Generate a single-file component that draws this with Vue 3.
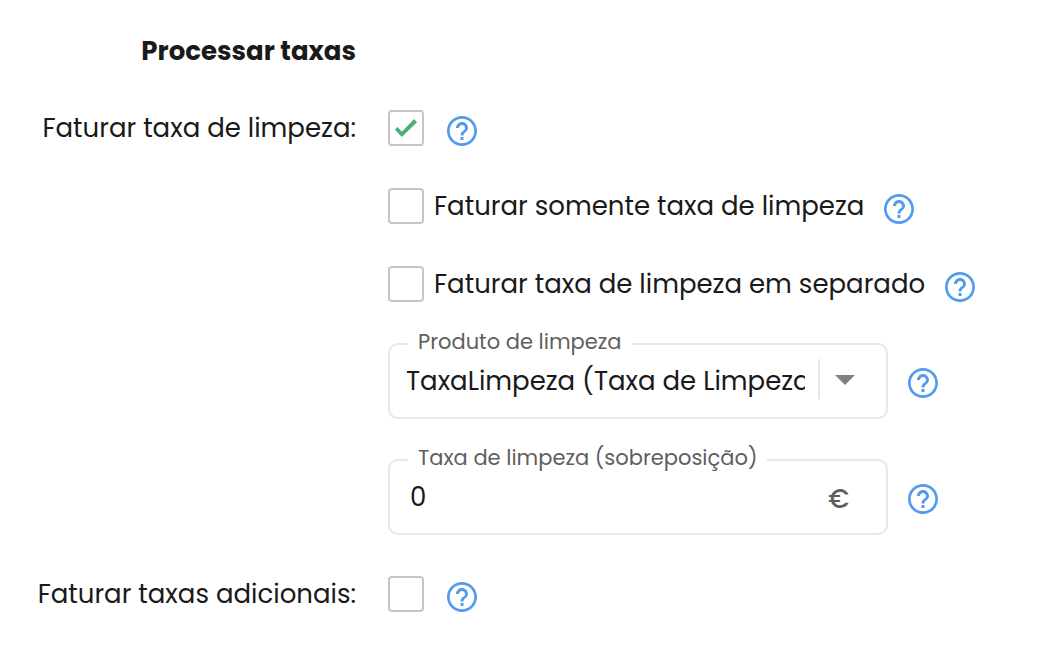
<script setup>
import { ref, h } from 'vue'

const cleaning = ref(true)
const onlyCleaning = ref(false)
const separate = ref(false)
const extra = ref(false)
const product = ref('taxa')
const amount = ref('0')

const HelpIcon = () =>
  h('svg', { viewBox: '0 0 24 24', width: 36, height: 36, fill: 'currentColor', 'aria-hidden': 'true' }, [
    h('path', {
      d: 'M11 18h2v-2h-2v2zm1-16C6.480 2 2 6.480 2 12s4.480 10 10 10 10-4.480 10-10S17.520 2 12 2zm0 18.200c-4.520 0-8.200-3.680-8.200-8.200s3.680-8.200 8.200-8.200 8.200 3.680 8.200 8.200-3.680 8.200-8.200 8.200zm0-14.200c-2.210 0-4 1.790-4 4h2c0-1.100.9-2 2-2s2 .9 2 2c0 2-3 1.750-3 5h2c0-2.250 3-2.500 3-5 0-2.210-1.790-4-4-4z'
    })
  ])
</script>

<template>
  <form class="fees" @submit.prevent>
    <h2 class="title">Processar taxas</h2>

    <label class="caption" for="cleaning">Faturar taxa de limpeza:</label>
    <div class="line">
      <input id="cleaning" v-model="cleaning" class="box" type="checkbox" />
      <button class="help" type="button" aria-label="Ajuda"><HelpIcon /></button>
    </div>

    <div class="line">
      <input id="only" v-model="onlyCleaning" class="box" type="checkbox" />
      <label class="option" for="only">Faturar somente taxa de limpeza</label>
      <button class="help" type="button" aria-label="Ajuda"><HelpIcon /></button>
    </div>

    <div class="line">
      <input id="separate" v-model="separate" class="box" type="checkbox" />
      <label class="option" for="separate">Faturar taxa de limpeza em separado</label>
      <button class="help" type="button" aria-label="Ajuda"><HelpIcon /></button>
    </div>

    <div class="line tall">
      <div class="field">
        <label class="float" for="product">Produto de limpeza</label>
        <select id="product" v-model="product" class="entry">
          <option value="taxa">TaxaLimpeza (Taxa de Limpeza)</option>
        </select>
        <span class="divider"></span>
        <svg class="arrow" viewBox="0 0 20 10" width="20" height="10" aria-hidden="true">
          <path d="M0 0h20L10 10z" fill="#808080" />
        </svg>
      </div>
      <button class="help" type="button" aria-label="Ajuda"><HelpIcon /></button>
    </div>

    <div class="line tall">
      <div class="field">
        <label class="float" for="amount">Taxa de limpeza (sobreposição)</label>
        <input id="amount" v-model="amount" class="entry amount" type="text" inputmode="decimal" />
        <span class="unit">€</span>
      </div>
      <button class="help" type="button" aria-label="Ajuda"><HelpIcon /></button>
    </div>

    <label class="caption" for="extra">Faturar taxas adicionais:</label>
    <div class="line">
      <input id="extra" v-model="extra" class="box" type="checkbox" />
      <button class="help" type="button" aria-label="Ajuda"><HelpIcon /></button>
    </div>
  </form>
</template>

<style>
body {
  background: #fff;
}
</style>

<style scoped>
.fees {
  display: grid;
  grid-template-columns: 356px minmax(0, 1fr);
  column-gap: 32px;
  row-gap: 36px;
  padding: 31px 20px 31px 0;
  font-family: Poppins, Inter, "Liberation Sans", sans-serif;
  font-size: 26px;
  line-height: 40px;
  color: #1a1a1a;
}

.title {
  grid-column: 1;
  margin: 0;
  font-size: 26px;
  font-weight: 700;
  text-align: right;
}

.caption {
  grid-column: 1;
  align-self: center;
  text-align: right;
  white-space: nowrap;
}

.line {
  grid-column: 2;
  display: flex;
  align-items: center;
}

.box {
  appearance: none;
  flex: none;
  display: grid;
  place-items: center;
  width: 36px;
  height: 36px;
  margin: 0;
  border: 2px solid #c6c6c6;
  border-radius: 4px;
  background: #fff;
}

.box:checked::before {
  content: "";
  width: 22px;
  height: 18px;
  background: #4caf7a;
  clip-path: polygon(0 60%, 11% 43%, 31% 71%, 87% 0, 100% 18%, 31% 100%);
}

.option {
  margin-left: 10px;
  white-space: nowrap;
}

.help {
  flex: none;
  width: 36px;
  height: 36px;
  margin: 6px 0 0 20px;
  padding: 0;
  border: 0;
  background: none;
  color: #539bee;
}

.option + .help,
.field + .help {
  margin-left: 17px;
}

.help svg {
  display: block;
}

.tall {
  padding: 2px 0;
}

.tall .help {
  margin-top: 4px;
}

.field {
  position: relative;
  display: flex;
  align-items: center;
  flex: 0 1 500px;
  min-width: 0;
  height: 76px;
  box-sizing: border-box;
  border: 2px solid #e6e6eb;
  border-radius: 10px;
}

.float {
  position: absolute;
  top: -19px;
  left: 18px;
  padding: 0 10px;
  background: #fff;
  font-size: 21px;
  line-height: 32px;
  color: #5f5f5f;
  white-space: nowrap;
}

.entry {
  appearance: none;
  flex: 1;
  min-width: 0;
  height: 72px;
  margin: 0;
  padding: 0 13px 0 16px;
  border: 0;
  background: none;
  font: inherit;
  color: #1a1a1a;
}

.amount {
  padding-left: 20px;
}

.divider {
  width: 2px;
  height: 40px;
  margin-bottom: 4px;
  background: #e6e6eb;
}

.arrow {
  margin: 0 31px 2px 15px;
}

.unit {
  margin-right: 37px;
  padding-top: 4px;
  font-weight: 500;
  color: #5f5f5f;
}
</style>
